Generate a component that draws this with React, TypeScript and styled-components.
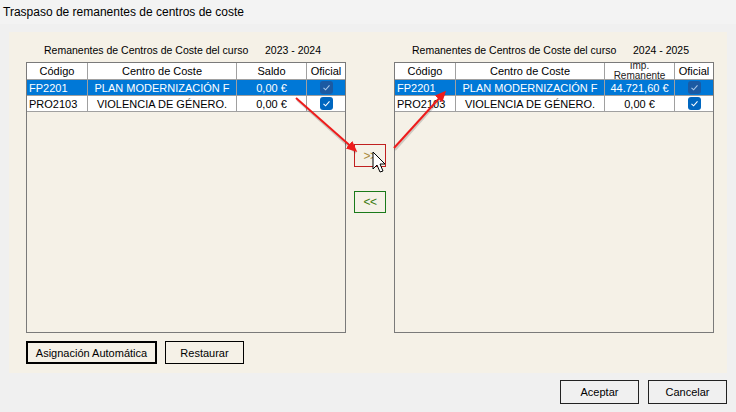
import React from 'react';
import styled, { createGlobalStyle } from 'styled-components';

const PANEL_BG = '#f5f1e7';

const GlobalStyle = createGlobalStyle`
  html, body {
    margin: 0;
    padding: 0;
    background: #f0f0f0;
  }
  body {
    font-family: "Liberation Sans", Arial, sans-serif;
    color: #000;
  }
  * {
    box-sizing: border-box;
  }
`;

const Window = styled.div`
  position: relative;
  width: 736px;
  height: 412px;
  background: #f0f0f0;
  overflow: hidden;
`;

const TitleBar = styled.div`
  height: 24px;
  padding-left: 3px;
  display: flex;
  align-items: center;
  font-size: 12px;
  background: #f3f3f3;
`;

const Body = styled.div`
  padding: 8px 9px 0 9px;
`;

const Panel = styled.div`
  display: flex;
  height: 341px;
  padding: 11px 13px 9px 17px;
  background: ${PANEL_BG};
`;

const Section = styled.div`
  display: flex;
  flex-direction: column;
  width: 320px;
`;

const CaptionRow = styled.div`
  display: flex;
  height: 14px;
  line-height: 14px;
  margin-bottom: 5px;
  padding-left: 18px;
  font-size: 10.5px;
  white-space: nowrap;
`;

const CaptionText = styled.span`
  width: 221px;
`;

const Grid = styled.div`
  width: 320px;
  height: 271px;
  border: 1px solid #7a7a7a;
  background: ${PANEL_BG};
  overflow: hidden;
`;

const Row = styled.div<{ $header?: boolean; $selected?: boolean }>`
  display: grid;
  grid-template-columns: 61px 149px 70px 38px;
  height: ${(p) => (p.$header ? 17 : 16)}px;
  background: ${(p) => (p.$selected ? '#0078d7' : '#fff')};
  color: ${(p) => (p.$selected ? '#fff' : '#000')};
  font-size: 11px;
`;

const Cell = styled.div<{ $align?: 'left' | 'center' }>`
  display: flex;
  align-items: center;
  justify-content: ${(p) => (p.$align === 'left' ? 'flex-start' : 'center')};
  padding-left: ${(p) => (p.$align === 'left' ? '2px' : '0')};
  border-right: 1px solid #a0a0a0;
  border-bottom: 1px solid #a0a0a0;
  white-space: nowrap;
  overflow: hidden;
  &:last-child {
    border-right: none;
  }
`;

const TwoLineHead = styled.div`
  display: flex;
  flex-direction: column;
  align-items: center;
  font-size: 10px;
  line-height: 10.5px;
  color: #222;
`;

const Check = styled.span<{ $selected?: boolean }>`
  display: inline-flex;
  align-items: center;
  justify-content: center;
  width: 13px;
  height: 13px;
  border-radius: 3px;
  background: ${(p) => (p.$selected ? '#1b5aa3' : '#0067c0')};
`;

const Middle = styled.div`
  width: 48px;
  display: flex;
  flex-direction: column;
  align-items: center;
  padding-top: 101px;
  gap: 24px;
`;

const MoveButton = styled.div<{ $tone: 'red' | 'green' }>`
  width: 32px;
  height: ${(p) => (p.$tone === 'red' ? 23 : 22)}px;
  display: flex;
  align-items: center;
  justify-content: center;
  border: 1px solid ${(p) => (p.$tone === 'red' ? '#c02020' : '#1a7a1a')};
  color: ${(p) => (p.$tone === 'red' ? '#a88a3a' : '#3a7a10')};
  font-size: 12px;
  letter-spacing: -0.5px;
`;

const ActionRow = styled.div`
  display: flex;
  gap: 8px;
  margin-top: 8px;
`;

const PanelButton = styled.div<{ $focused?: boolean; $w: number }>`
  width: ${(p) => p.$w}px;
  height: 23px;
  display: flex;
  align-items: center;
  justify-content: center;
  border: ${(p) => (p.$focused ? '2px solid #000' : '1px solid #000')};
  font-size: 11px;
`;

const Footer = styled.div`
  display: flex;
  justify-content: flex-end;
  gap: 9px;
  padding-right: 9px;
  margin-top: 7px;
`;

const DialogButton = styled.div`
  width: 79px;
  height: 24px;
  display: flex;
  align-items: center;
  justify-content: center;
  border: 1px solid #222;
  background: #f0f0f0;
  font-size: 11px;
`;

const Overlay = styled.svg`
  position: absolute;
  left: 0;
  top: 0;
  pointer-events: none;
`;

type Item = { code: string; name: string; amount: string; selected?: boolean };

const CheckBox = ({ selected }: { selected?: boolean }) => (
  <Check $selected={selected}>
    <svg width="9" height="9" viewBox="0 0 9 9">
      <polyline
        points="1.5,4.8 3.6,6.8 7.5,2.4"
        fill="none"
        stroke={selected ? '#a9c8ea' : '#fff'}
        strokeWidth="1.1"
      />
    </svg>
  </Check>
);

const CostGrid = ({ amountHead, items }: { amountHead: React.ReactNode; items: Item[] }) => (
  <Grid>
    <Row $header>
      <Cell>Código</Cell>
      <Cell>Centro de Coste</Cell>
      <Cell>{amountHead}</Cell>
      <Cell>Oficial</Cell>
    </Row>
    {items.map((it) => (
      <Row key={it.code} $selected={it.selected}>
        <Cell $align="left">{it.code}</Cell>
        <Cell>{it.name}</Cell>
        <Cell>{it.amount}</Cell>
        <Cell>
          <CheckBox selected={it.selected} />
        </Cell>
      </Row>
    ))}
  </Grid>
);

const leftItems: Item[] = [
  { code: 'FP2201', name: 'PLAN MODERNIZACIÓN F', amount: '0,00 €', selected: true },
  { code: 'PRO2103', name: 'VIOLENCIA DE GÉNERO.', amount: '0,00 €' },
];

const rightItems: Item[] = [
  { code: 'FP2201', name: 'PLAN MODERNIZACIÓN F', amount: '44.721,60 €', selected: true },
  { code: 'PRO2103', name: 'VIOLENCIA DE GÉNERO.', amount: '0,00 €' },
];

const App: React.FC = () => {
  return (
    <>
      <GlobalStyle />
      <Window>
        <TitleBar>Traspaso de remanentes de centros de coste</TitleBar>
        <Body>
          <Panel>
            <Section>
              <CaptionRow>
                <CaptionText>Remanentes de Centros de Coste del curso</CaptionText>
                <span>2023 - 2024</span>
              </CaptionRow>
              <CostGrid amountHead="Saldo" items={leftItems} />
              <ActionRow>
                <PanelButton $focused $w={131}>Asignación Automática</PanelButton>
                <PanelButton $w={79}>Restaurar</PanelButton>
              </ActionRow>
            </Section>

            <Middle>
              <MoveButton $tone="red">&gt;&gt;</MoveButton>
              <MoveButton $tone="green">&lt;&lt;</MoveButton>
            </Middle>

            <Section>
              <CaptionRow>
                <CaptionText>Remanentes de Centros de Coste del curso</CaptionText>
                <span>2024 - 2025</span>
              </CaptionRow>
              <CostGrid
                amountHead={
                  <TwoLineHead>
                    <span>Imp.</span>
                    <span>Remanente</span>
                  </TwoLineHead>
                }
                items={rightItems}
              />
            </Section>
          </Panel>
        </Body>
        <Footer>
          <DialogButton>Aceptar</DialogButton>
          <DialogButton>Cancelar</DialogButton>
        </Footer>

        {/* annotation arrows + mouse cursor drawn over the dialog */}
        <Overlay width="736" height="412" viewBox="0 0 736 412">
          <defs>
            <marker id="head" markerWidth="11" markerHeight="10" refX="8" refY="5" orient="auto" markerUnits="userSpaceOnUse">
              <path d="M0,0 L11,5 L0,10 Z" fill="#ee1c1c" />
            </marker>
          </defs>
          <g stroke="rgba(0,0,0,0.16)" strokeWidth="2" fill="none">
            <line x1="297" y1="100" x2="356" y2="153" />
            <line x1="395" y1="150" x2="445" y2="94" />
          </g>
          <g stroke="#ee1c1c" strokeWidth="2" fill="none">
            <line x1="296" y1="98" x2="355" y2="150" markerEnd="url(#head)" />
            <line x1="394" y1="148" x2="444" y2="93" markerEnd="url(#head)" />
          </g>
          <path
            d="M373,152 L373,169 L377,165 L380,172 L383,171 L380,164 L385,164 Z"
            fill="#fff"
            stroke="#000"
            strokeWidth="1"
            strokeLinejoin="round"
          />
        </Overlay>
      </Window>
    </>
  );
};

export default App;
